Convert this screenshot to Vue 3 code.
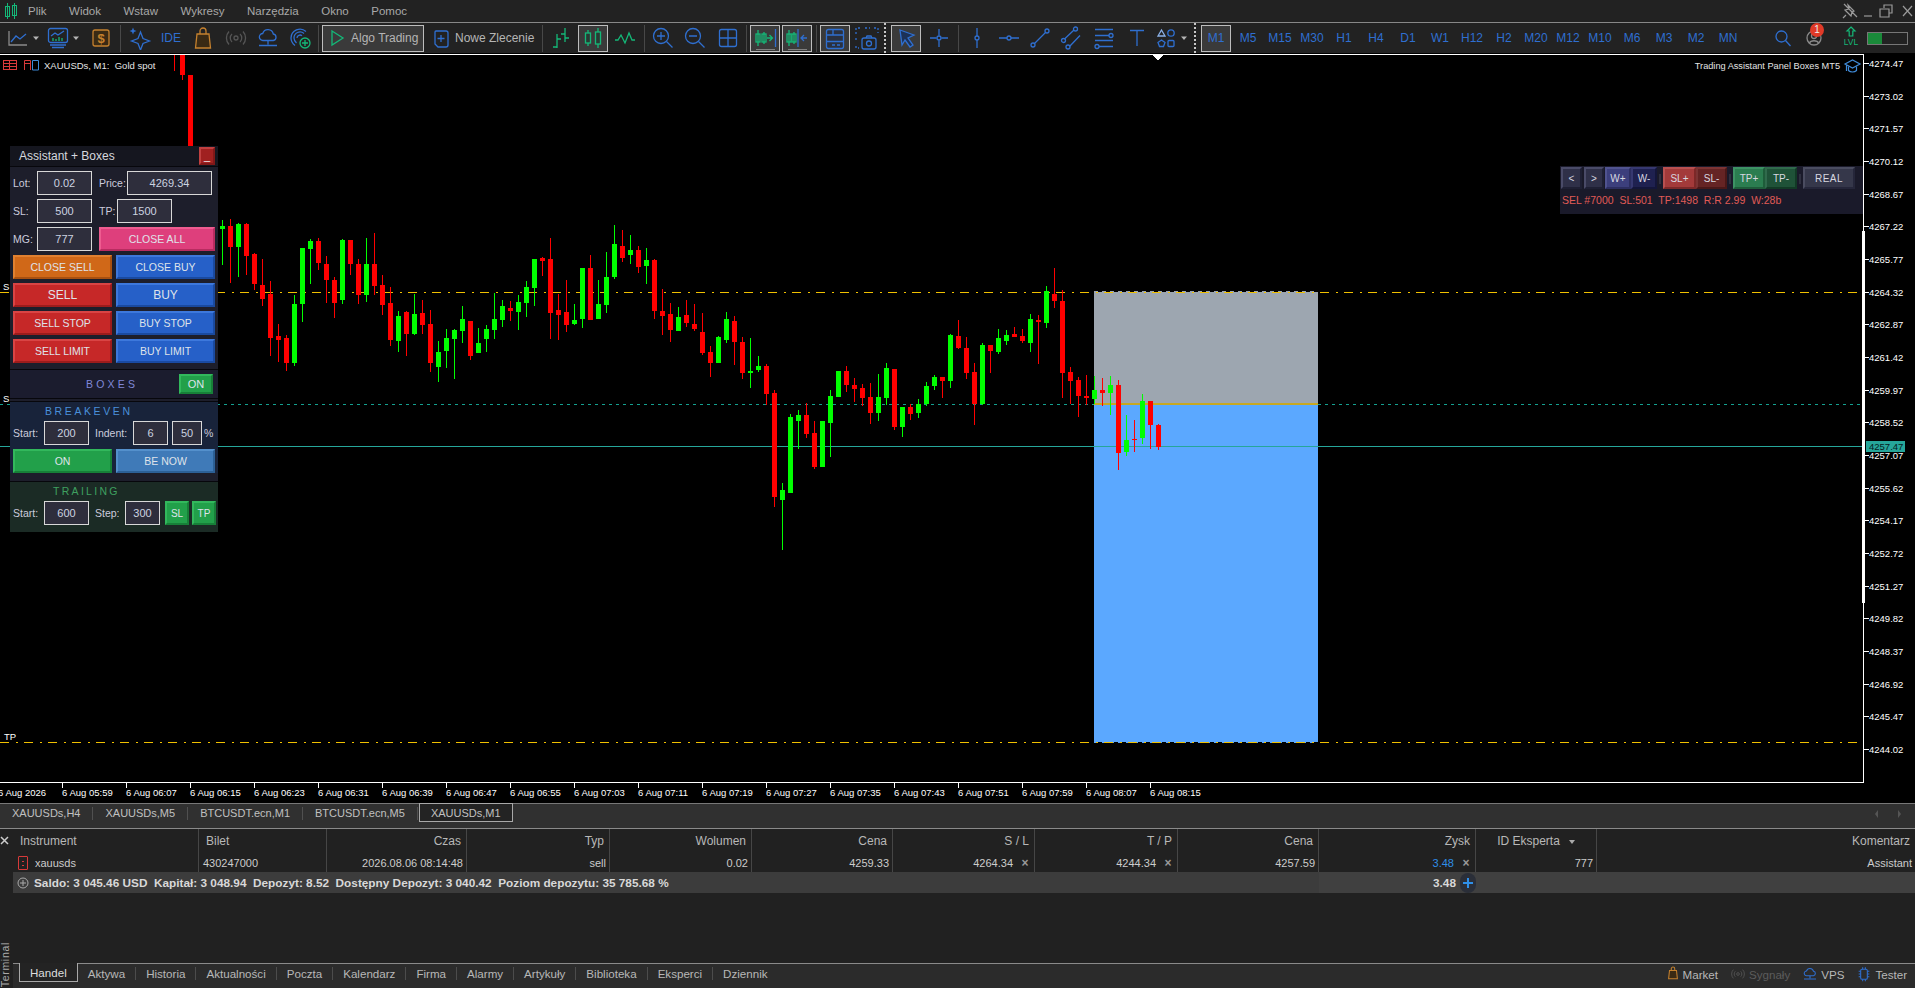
<script setup>
// colours used by the toolbar icons
const B = '#2f6fd0'
const G = '#14b878'
const O = '#c5812e'
const D = '#8a8a8a'

const arcs = c => `<circle cx="12" cy="12" r="2" stroke="${c}"/><path d="M8 8a5.5 5.5 0 0 0 0 8M16 8a5.5 5.5 0 0 1 0 8M5 5.5a9.5 9.5 0 0 0 0 13M19 5.5a9.5 9.5 0 0 1 0 13" stroke="${c}"/>`
const cloud = `<path d="M7 14.5a3.5 3.5 0 0 1-.3-7 5.5 5.5 0 0 1 10.6.5 3.3 3.3 0 0 1 0 6.5zM12 14.5v4M3 19.5h18" stroke="${B}"/>`
const bag = `<path d="M6 8h12l1.5 14h-15z" stroke="${O}" fill="#3a2a14"/><path d="M9 8V5a3 3 0 0 1 6 0v3" stroke="${O}"/>`
const dot = (x, y) => `<circle cx="${x}" cy="${y}" r="2" stroke="${B}"/>`

const icons = {
  line: `<path d="M3 5v14h18" stroke="${D}"/><path d="M5 16l5-6 4 3 6-5" stroke="${B}"/>`,
  caret: `<path d="M9 10.5h6l-3 3.5z" fill="#b5b5b5"/>`,
  monitor: `<rect x="2.5" y="2.5" width="19" height="14" rx="2" stroke="${B}"/><path d="M5 10l4-3 3 2 6-4" stroke="${B}"/><path d="M7 15v-3M10 15v-2M13 15v-4M16 15v-3" stroke="${G}"/><path d="M4 19h16M6 21.5h12" stroke="${B}"/>`,
  dollar: `<rect x="4" y="4" width="16" height="16" rx="2" stroke="${O}" fill="#3a2a14"/><text x="12" y="16.5" font-size="13" font-weight="700" text-anchor="middle" fill="${O}" font-family="Liberation Sans, sans-serif">$</text>`,
  star: `<path d="M12.5 6l2.5 6.5 6.5 2.5-6.5 2.5-2.5 6.5-2.5-6.5-6.5-2.5 6.5-2.5z" stroke="${B}"/><path d="M5 1.5l1 2.5 2.5 1-2.5 1-1 2.5-1-2.5-2.5-1 2.5-1z" fill="${B}"/>`,
  bag,
  signal: arcs('#555'),
  cloud,
  signalPlus: `<path d="M3 12a9 9 0 0 1 15-6.500M6 12a6 6 0 0 1 10-4.500M9 12a3 3 0 0 1 5-2.200M3 12c0 3 1.500 5.500 4 7.500M6 12c0 2 1 3.500 2.500 5" stroke="${B}"/><circle cx="17" cy="17" r="5" stroke="${G}"/><path d="M17 14v6M14 17h6" stroke="${G}"/>`,
  play: `<path d="M7 5l11 7-11 7z" stroke="${G}"/>`,
  order: `<path d="M7 5h10a2 2 0 0 1 2 2v12a2 2 0 0 1-2 2h-8l-3-3V6a1 1 0 0 1 1-1z" stroke="${B}"/><path d="M12 9v7M8.500 12.500h7" stroke="${B}"/>`,
  bars: `<path d="M8 8v14M4 21h4M8 13h4M16 2v14M12 8h4M16 12h4" stroke="${G}"/>`,
  candles: `<path d="M7 4v16M17 2v20" stroke="${G}"/><rect x="4.500" y="7" width="5" height="10" stroke="${G}" fill="#2a3a34"/><rect x="14.500" y="6" width="5" height="12" stroke="${G}" fill="#2a3a34"/>`,
  zig: `<path d="M2 14h3l3-5 4 8 4-10 3 7h3" stroke="${G}"/>`,
  zoomIn: `<circle cx="10" cy="10" r="7.500" stroke="${B}"/><path d="M15.500 15.500l6 6M10 6v8M6 10h8" stroke="${B}"/>`,
  zoomOut: `<circle cx="10" cy="10" r="7.500" stroke="${B}"/><path d="M15.500 15.500l6 6M6 10h8" stroke="${B}"/>`,
  grid: `<rect x="3.500" y="3.500" width="17" height="17" rx="2" stroke="${B}"/><path d="M12 3.500v17M3.500 12h17" stroke="${B}"/>`,
  shiftR: `<path d="M5 4v16M11 6v12" stroke="${G}"/><rect x="3" y="8" width="4" height="8" stroke="${G}"/><rect x="9" y="8" width="4" height="8" stroke="${G}"/><path d="M14 12h5M16.500 9l3 3-3 3" stroke="${G}"/><path d="M22.500 3v18" stroke="${B}"/><path d="M3 24h19" stroke="#999" stroke-width="1.500"/>`,
  shiftL: `<path d="M4 4v16M9 6v12" stroke="${G}"/><rect x="2" y="8" width="4" height="8" stroke="${G}"/><rect x="7" y="8" width="4" height="8" stroke="${G}"/><path d="M13 3v18" stroke="${B}"/><path d="M22 12h-6M19 9l-3 3 3 3" stroke="${B}"/><path d="M3 24h19" stroke="#999" stroke-width="1.500"/>`,
  layout: `<rect x="3.500" y="3.500" width="17" height="19" rx="2" stroke="${B}" fill="#2a3140"/><path d="M3.500 9h17M3.500 15.500h17M10 3.500V9M9 19h3M14 19h3" stroke="${B}"/>`,
  camera: `<path d="M1 8V2h5M10 2h5M19 2h4v5M1 12v4M1 20v2h3" stroke="${B}" stroke-dasharray="2 2"/><rect x="7" y="12" width="14" height="11" rx="2" stroke="${B}"/><path d="M11 12l1-2h4l1 2" stroke="${B}"/><circle cx="14" cy="17.500" r="2.500" stroke="${B}"/>`,
  cursor: `<path d="M6 4l14 5-6 3 5 7-3 2-5-7-3 5z" stroke="${B}" fill="#1c3157"/>`,
  cross: `<path d="M12 3v6.500M12 14.500V21M3 12h6.500M14.500 12H21" stroke="${B}"/>${dot(12, 12)}`,
  vline: `<path d="M12 2v8M12 14v8" stroke="${B}"/>${dot(12, 12)}`,
  hline: `<path d="M2 12h8M14 12h8" stroke="${B}"/>${dot(12, 12)}`,
  trend: `<path d="M6.500 17.500L17.500 6.500" stroke="${B}"/>${dot(5, 19)}${dot(19, 5)}`,
  channel: `<path d="M4.500 13L14 4M9.500 20.500L20 9.500" stroke="${B}"/>${dot(3.5, 14.500)}${dot(15.500, 3)}${dot(8, 21)}`,
  fibo: `<path d="M3 3.500h18M3 9.500h14M3 14.500h18M7 20.500h14" stroke="${B}"/>${dot(19, 9.500)}${dot(5, 20.500)}`,
  textTool: `<path d="M5 4.500h14M12 4.500V20" stroke="${B}"/>`,
  shapes: `<path d="M7.500 4l3.500 6H4z" stroke="#8ab0e6"/><circle cx="17" cy="7" r="3.200" stroke="${B}"/><path d="M7.500 14l3.500 2.500-1.500 4h-4L4 16.500z" stroke="${B}"/><rect x="14" y="14.500" width="6" height="6" rx="1" stroke="${B}"/>`,
  search: `<circle cx="10.500" cy="10.500" r="5.500" stroke="${B}"/><path d="M14.500 14.500l5 5.500" stroke="${B}"/>`,
  avatar: `<circle cx="12" cy="12" r="7" stroke="${D}"/><circle cx="12" cy="10" r="2.500" stroke="${D}"/><path d="M7.500 17c1-3 8-3 9 0" stroke="${D}"/>`,
  level: `<path d="M12 1l4 4h-2.200v5h-3.600V5H8z" stroke="${G}"/><text x="12" y="19" font-size="8.500" text-anchor="middle" fill="${G}" font-family="Liberation Sans, sans-serif">LVL</text>`,
  chip: `<rect x="7" y="5" width="10" height="15" rx="2" stroke="${B}"/><path d="M4 8h3M4 12h3M4 16h3M17 8h3M17 12h3M17 16h3M10 2v3M14 2v3M10 20v3M14 20v3" stroke="${B}"/>`
}

// toolbar runs left to right, w is the slot width in px
const tools = [
  { w: 4 }, { w: 28, icon: 'line' }, { w: 8, icon: 'caret' }, { w: 3 },
  { w: 30, icon: 'monitor' }, { w: 6, icon: 'caret' }, { w: 7 }, { w: 30, icon: 'dollar' },
  { w: 8, sep: 1 }, { w: 32, icon: 'star' }, { w: 30, text: 'IDE' }, { w: 34, icon: 'bag' },
  { w: 32, icon: 'signal' }, { w: 32, icon: 'cloud' }, { w: 32, icon: 'signalPlus' },
  { w: 4, sep: 1 }, { w: 2 },
  { w: 102, icon: 'play', label: 'Algo Trading', on: true }, { w: 3 },
  { w: 106, icon: 'order', label: 'Nowe Zlecenie' }, { w: 5 }, { w: 8, sep: 1 },
  { w: 30, icon: 'bars' }, { w: 2 }, { w: 30, icon: 'candles', on: true }, { w: 34, icon: 'zig' },
  { w: 4, sep: 1 }, { w: 2 }, { w: 30, icon: 'zoomIn' }, { w: 34, icon: 'zoomOut' },
  { w: 32, icon: 'grid' }, { w: 4, sep: 1 }, { w: 2 },
  { w: 30, icon: 'shiftR', on: true }, { w: 2 }, { w: 30, icon: 'shiftL', on: true },
  { w: 8, sep: 1 }, { w: 30, icon: 'layout', on: true }, { w: 33, icon: 'camera' },
  { w: 4, sep: 2 }, { w: 4 }, { w: 30, icon: 'cursor', on: true }, { w: 35, icon: 'cross' },
  { w: 4, sep: 1 }, { w: 34, icon: 'vline' }, { w: 30, icon: 'hline' }, { w: 32, icon: 'trend' },
  { w: 32, icon: 'channel' }, { w: 32, icon: 'fibo' }, { w: 33, icon: 'textTool' },
  { w: 26, icon: 'shapes' }, { w: 10, icon: 'caret' }, { w: 4 }, { w: 4, sep: 2 }, { w: 4 }
]
const frames = ['M1', 'M5', 'M15', 'M30', 'H1', 'H4', 'D1', 'W1', 'H12', 'H2', 'M20', 'M12', 'M10', 'M6', 'M3', 'M2', 'MN']

const menu = ['Plik', 'Widok', 'Wstaw', 'Wykresy', 'Narzędzia', 'Okno', 'Pomoc']

// candles read off the chart: [green?, high, bodyTop, bodyBottom, low], at 3x from a base y
const first = [[1,30,48,57,165],[0,28,48,111,218],[1,40,42,111,200],[0,40,42,138,195],[0,130,132,222,240],[0,148,225,267,288],[0,213,252,384,438],[0,342,378,390,456],[0,376,384,459,483],[1,255,282,459,468],[1,114,114,282,336],[1,87,93,117,222],[0,84,93,159,180],[0,138,162,210,279],[0,201,210,279,324],[1,87,90,270,282],[0,90,90,162,195],[0,147,162,255,282],[1,84,162,255,276],[0,69,162,228,255],[0,195,225,285,315],[0,231,279,390,408],[1,303,318,393,426],[0,303,306,372,438],[1,252,312,372,375],[0,270,309,345,372],[0,300,342,459,486],[1,393,426,471,516],[1,357,384,423,474],[1,357,360,387,507],[1,288,327,363,399],[0,333,333,438,450],[1,354,399,429,429],[1,345,357,387,426],[1,249,327,360,387],[1,270,288,330,351],[0,273,294,303,333],[1,255,276,306,360],[1,213,231,279,321],[1,147,147,234,288],[0,141,144,153,198],[0,84,147,309,387],[0,252,300,315,390],[0,210,306,345,366],[1,282,330,342,345],[1,174,174,327,354],[0,135,174,330,330],[1,210,282,327,327],[1,126,201,285,309],[1,45,102,201,207],[0,60,108,144,156],[1,75,120,135,162],[0,108,120,171,189],[1,114,150,168,222],[0,147,150,303,327],[0,237,303,318,375],[0,279,312,360,396],[1,291,321,363,363],[0,270,315,339,351],[0,282,342,357,363]]
const second = [[0,129,186,249,255],[0,228,246,279,321],[1,198,201,279,279],[1,126,147,210,219],[0,138,153,216,285],[0,201,216,309,327],[1,204,303,309,354],[1,258,288,300,306],[0,282,288,372,405],[0,360,369,681,711],[1,640,660,690,840],[1,432,441,669,669],[1,420,435,453,537],[0,399,435,492,504],[0,453,489,591,597],[1,453,453,591,591],[1,360,378,459,561],[1,303,303,381,381],[0,288,303,345,366],[0,324,345,357,396],[0,342,354,384,408],[0,339,381,429,462],[1,312,381,429,453],[1,279,294,384,405],[0,297,297,471,480],[1,411,411,471,501],[0,402,411,432,450],[1,387,402,429,444],[1,336,348,402,408],[1,315,321,348,360],[0,321,321,333,384],[1,192,195,333,354],[0,150,198,234,237],[0,201,234,309,327],[0,279,306,402,465],[1,219,225,402,405],[0,225,225,243,309],[1,177,204,246,252],[1,180,195,213,225],[0,171,192,201,201],[0,177,198,213,219],[1,132,147,219,246],[0,135,150,156,282],[1,48,63,159,174],[0,-6,72,93,114],[0,60,93,309,384],[0,291,306,333,402],[0,321,330,378,441],[0,315,378,384,405],[1,318,360,387,402],[0,324,360,369,408],[1,318,345,369,435],[0,330,345,549,600],[1,435,510,546,558],[0,450,507,510,546],[1,372,393,504,522],[0,393,393,465,537],[0,462,465,531,540]]

function build(list, base, startIndex) {
  return list.map((c, i) => {
    const x = 222 + (startIndex + i) * 8
    const top = Math.round(base + c[2] / 3)
    return {
      x,
      color: c[0] ? '#00ff00' : '#ff0000',
      hi: Math.round(base + c[1] / 3),
      lo: Math.round(base + c[4] / 3),
      top,
      h: Math.max(1, Math.round(base + c[3] / 3) - top)
    }
  })
}
const candles = [...build(first, 210, 0), ...build(second, 270, 60)]

const priceTicks = Array.from({ length: 22 }, (_, i) => ({
  y: Math.round(63 + 32.67 * i),
  label: (4274.47 - 1.45 * i).toFixed(2)
}))

function clock(m) {
  const h = Math.floor(m / 60)
  return '6 Aug ' + String(h).padStart(2, '0') + ':' + String(m % 60).padStart(2, '0')
}
const timeTicks = Array.from({ length: 18 }, (_, i) => ({ x: 62 + i * 64, label: clock(359 + i * 8) }))

const chartTabs = ['XAUUSDs,H4', 'XAUUSDs,M5', 'BTCUSDT.ecn,M1', 'BTCUSDT.ecn,M5']
const bottomTabs = ['Aktywa', 'Historia', 'Aktualności', 'Poczta', 'Kalendarz', 'Firma', 'Alarmy', 'Artykuły', 'Biblioteka', 'Eksperci', 'Dziennik']
</script>

<template>
  <div class="page">
    <div class="menubar">
      <svg class="logo" width="14" height="18" viewBox="0 0 14 18" fill="none">
        <path d="M3.500 1v16M10.500 1v16" stroke="#14b878" />
        <rect x="1.500" y="4.500" width="4" height="10" stroke="#14b878" />
        <rect x="8.500" y="3.500" width="4" height="10" stroke="#14b878" />
      </svg>
      <span v-for="m in menu" :key="m" class="menu-item">{{ m }}</span>
      <div class="win">
        <svg width="18" height="18" viewBox="0 0 18 18" fill="none" stroke="#9a9a9a" stroke-width="1.200">
          <path d="M7 3l6 6-2 1-1 4-6-6 4-1zM5 13l-3 3M3 2l13 13" />
        </svg>
        <svg width="18" height="18" viewBox="0 0 18 18" fill="none" stroke="#9a9a9a" stroke-width="1.200"><path d="M5 14h8" /></svg>
        <svg width="18" height="18" viewBox="0 0 18 18" fill="none" stroke="#9a9a9a" stroke-width="1.200">
          <path d="M7 6V3h8v8h-3M3 7h9v8H3z" />
        </svg>
        <svg class="win-close" width="15" height="18" viewBox="0 0 15 18" fill="none" stroke="#9a9a9a" stroke-width="1.200"><path d="M3 4l9 10M12 4L3 14" /></svg>
      </div>
    </div>

    <div class="toolbar">
      <template v-for="(t, i) in tools" :key="i">
        <div v-if="t.sep" class="slot" :style="{ width: t.w + 'px' }">
          <i :class="t.sep === 2 ? 'dots' : 'bar'"></i>
        </div>
        <div v-else class="slot" :class="{ on: t.on, wide: t.label }" :style="{ width: t.w + 'px' }">
          <svg v-if="t.icon" class="ico" width="24" height="24" viewBox="0 0 24 24" fill="none" stroke-width="1.300" v-html="icons[t.icon]"></svg>
          <span v-if="t.label" class="tool-label">{{ t.label }}</span>
          <span v-if="t.text" class="tool-text">{{ t.text }}</span>
        </div>
      </template>
      <span v-for="(f, i) in frames" :key="f" class="tf" :class="{ on: i === 0 }">{{ f }}</span>
      <div class="tool-right">
        <svg width="24" height="24" viewBox="0 0 24 24" fill="none" stroke-width="1.300" v-html="icons.search"></svg>
        <div class="avatar">
          <svg width="24" height="24" viewBox="0 0 24 24" fill="none" stroke-width="1.300" v-html="icons.avatar"></svg>
          <span class="badge">1</span>
        </div>
        <svg class="lvl" width="24" height="24" viewBox="0 0 24 24" fill="none" stroke-width="1.200" v-html="icons.level"></svg>
        <div class="meter"><i></i></div>
      </div>
    </div>

    <div class="chart">
      <svg class="plot" width="1915" height="750" viewBox="0 53 1915 750">
        <g shape-rendering="crispEdges">
          <rect x="0" y="54" width="1864" height="1" fill="#fff" />
          <path d="M1152 55h12l-6 5z" fill="#fff" />

          <!-- position box -->
          <rect x="1094" y="292" width="224" height="112" fill="#9da6b0" />
          <rect x="1094" y="404" width="224" height="338" fill="#5ba8ff" />
          <path d="M1094 291.500h224" stroke="#9da6b0" stroke-dasharray="4 4" />
          <path d="M1094 742.500h224" stroke="#5ba8ff" stroke-dasharray="4 4" />

          <!-- levels -->
          <path d="M0 292.500h1863" stroke="#f0c000" stroke-dasharray="9 7 2 6" />
          <path d="M0 742.500h1863" stroke="#f0c000" stroke-dasharray="9 7 2 6" />
          <path d="M0 404.500h1094" stroke="#14a090" stroke-dasharray="3 4" />
          <path d="M1318 404.500h545" stroke="#14a090" stroke-dasharray="3 4" />
          <rect x="0" y="446" width="1863" height="1" fill="#26a69a" />
          <rect x="1094" y="403" width="224" height="2" fill="#c8a820" />

          <!-- candles -->
          <rect x="174" y="55" width="1" height="16" fill="#ff0000" />
          <rect x="182" y="55" width="1" height="25" fill="#ff0000" />
          <rect x="180" y="55" width="5" height="20" fill="#ff0000" />
          <rect x="188" y="75" width="5" height="72" fill="#ff0000" />
          <g v-for="c in candles" :key="c.x">
            <rect :x="c.x" :y="c.hi" width="1" :height="c.lo - c.hi" :fill="c.color" />
            <rect :x="c.x - 2" :y="c.top" width="5" :height="c.h" :fill="c.color" />
          </g>

          <!-- axes -->
          <rect x="0" y="782" width="1864" height="1" fill="#fff" />
          <rect x="1863" y="54" width="1" height="729" fill="#fff" />
          <rect x="1862" y="231" width="3" height="372" fill="#fff" />
          <rect v-for="p in priceTicks" :key="p.y" x="1864" :y="p.y" width="5" height="1" fill="#fff" />
          <rect v-for="t in timeTicks" :key="t.x" :x="t.x" y="783" width="1" height="5" fill="#fff" />
        </g>

        <text v-for="p in priceTicks" :key="p.label" class="axis" x="1869" :y="p.y + 4">{{ p.label }}</text>
        <rect x="1866" y="441" width="39" height="11" fill="#26a69a" />
        <text class="axis bid" x="1869" y="450">4257.47</text>
        <text v-for="t in timeTicks" :key="t.label" class="axis" :x="t.x" y="796">{{ t.label }}</text>
        <text class="axis" x="-2" y="796">6 Aug 2026</text>

        <text class="axis" x="3" y="290">S</text>
        <text class="axis" x="3" y="402">S</text>
        <text class="axis" x="4" y="740">TP</text>

        <!-- chart corner marks -->
        <g fill="none" stroke-width="1">
          <rect x="3.500" y="60.500" width="13" height="9" stroke="#d93a3a" />
          <path d="M3 63.500h14M3 66.500h14M9.500 60v10" stroke="#d93a3a" />
          <path d="M24.500 70V60.500h6V70" stroke="#d93a3a" />
          <path d="M32.500 60.500h6V70h-6z" stroke="#3f8ad8" />
          <path d="M25 63.500h5" stroke="#d93a3a" />
        </g>
        <text class="axis title-l" x="44" y="69">XAUUSDs, M1:&nbsp; Gold spot</text>
        <text class="axis title-r" x="1840" y="69" text-anchor="end">Trading Assistant Panel Boxes MT5</text>
        <g fill="none" stroke="#3f8ad8" stroke-width="1.200">
          <path d="M1845 64l7.500-4 7.500 4-7.500 4z" />
          <path d="M1848.500 66.500v4c2 2 6 2 8 0v-4M1846.500 65v6" />
        </g>
      </svg>

      <!-- assistant panel floats over the chart -->
      <div class="panel">
        <div class="panel-title">
          <span>Assistant + Boxes</span>
          <button class="btn min">_</button>
        </div>
        <div class="panel-body">
          <div class="row">
            <label class="lab-a">Lot:</label><span class="field f55">0.02</span>
            <label class="lab-p">Price:</label><span class="field f85">4269.34</span>
          </div>
          <div class="row">
            <label class="lab-a">SL:</label><span class="field f55">500</span>
            <label class="lab-t">TP:</label><span class="field f55">1500</span>
          </div>
          <div class="row">
            <label class="lab-a">MG:</label><span class="field f55">777</span>
            <button class="btn pink closeall">CLOSE ALL</button>
          </div>
          <div class="pair"><button class="btn orange">CLOSE SELL</button><button class="btn blue">CLOSE BUY</button></div>
          <div class="pair"><button class="btn red big">SELL</button><button class="btn blue big">BUY</button></div>
          <div class="pair"><button class="btn red">SELL STOP</button><button class="btn blue">BUY STOP</button></div>
          <div class="pair"><button class="btn red">SELL LIMIT</button><button class="btn blue">BUY LIMIT</button></div>
        </div>
        <div class="boxes">
          <span class="boxes-name">BOXES</span>
          <button class="btn green boxes-on">ON</button>
        </div>
        <div class="gap3"></div>
        <div class="be">
          <div class="be-title">BREAKEVEN</div>
          <div class="row">
            <label class="lab-s">Start:</label><span class="field f45">200</span>
            <label class="lab-i">Indent:</label><span class="field f35">6</span>
            <span class="field f30">50</span><label class="lab-pc">%</label>
          </div>
          <div class="pair"><button class="btn green">ON</button><button class="btn steel">BE NOW</button></div>
        </div>
        <div class="gap8"></div>
        <div class="tr">
          <div class="tr-title">TRAILING</div>
          <div class="row">
            <label class="lab-s">Start:</label><span class="field f45">600</span>
            <label class="lab-st">Step:</label><span class="field f35">300</span>
            <button class="btn green tiny">SL</button><button class="btn green tiny">TP</button>
          </div>
        </div>
      </div>

      <div class="quick">
        <div class="quick-row">
          <button class="qb qb-nav w21">&lt;</button>
          <button class="qb qb-nav w20 ml2">&gt;</button>
          <button class="qb qb-wp w26 ml1">W+</button>
          <button class="qb qb-wm w26">W-</button>
          <i class="qsep"></i>
          <button class="qb qb-sp w33">SL+</button>
          <button class="qb qb-sm w31">SL-</button>
          <i class="qsep"></i>
          <button class="qb qb-tp w32">TP+</button>
          <button class="qb qb-tm w32">TP-</button>
          <i class="qsep"></i>
          <button class="qb qb-real w52">REAL</button>
        </div>
        <div class="quick-info">SEL #7000&nbsp; SL:501&nbsp; TP:1498&nbsp; R:R 2.99&nbsp; W:28b</div>
      </div>
    </div>

    <div class="tabstrip">
      <span v-for="t in chartTabs" :key="t" class="ctab">{{ t }}</span>
      <span class="ctab active">XAUUSDs,M1</span>
      <svg class="tab-arrows" width="28" height="10" viewBox="0 0 28 10" fill="#555">
        <path d="M4 1L1 5l3 4zM24 1l3 4-3 4z" />
      </svg>
    </div>

    <div class="terminal">
      <div class="side">
        <svg width="10" height="10" viewBox="0 0 10 10" fill="none" stroke="#ccc" stroke-width="1.500"><path d="M1 1l7 7M8 1L1 8" /></svg>
        <span class="side-label">Terminal</span>
      </div>
      <div class="term-main">
        <div class="table">
          <div class="cell head pl">Instrument</div>
          <div class="cell head pl">Bilet</div>
          <div class="cell head r">Czas</div>
          <div class="cell head r">Typ</div>
          <div class="cell head r">Wolumen</div>
          <div class="cell head r">Cena</div>
          <div class="cell head r">S / L</div>
          <div class="cell head r">T / P</div>
          <div class="cell head r">Cena</div>
          <div class="cell head r">Zysk</div>
          <div class="cell head id">ID Eksperta<i class="sort"></i></div>
          <div class="cell head r last">Komentarz</div>

          <div class="cell val instrument"><i class="sell-mark"></i>xauusds</div>
          <div class="cell val">430247000</div>
          <div class="cell val r">2026.08.06 08:14:48</div>
          <div class="cell val r">sell</div>
          <div class="cell val r">0.02</div>
          <div class="cell val r">4259.33</div>
          <div class="cell val r x">4264.34<em>×</em></div>
          <div class="cell val r x">4244.34<em>×</em></div>
          <div class="cell val r">4257.59</div>
          <div class="cell val r x"><b>3.48</b><em>×</em></div>
          <div class="cell val r">777</div>
          <div class="cell val r last">Assistant</div>

          <div class="summary-text">
            <svg width="12" height="12" viewBox="0 0 12 12" fill="none" stroke="#aaa"><circle cx="6" cy="6" r="5" /><path d="M6 3v6M3 6h6" /></svg>
            <span>Saldo: 3 045.46 USD&nbsp; Kapitał: 3 048.94&nbsp; Depozyt: 8.52&nbsp; Dostępny Depozyt: 3 040.42&nbsp; Poziom depozytu: 35 785.68 %</span>
          </div>
          <div class="summary-sum">
            <span>3.48</span>
            <span class="plus"><svg width="14" height="14" viewBox="0 0 14 14" stroke="#2f8fe8" stroke-width="2"><path d="M7 2v10M2 7h10" /></svg></span>
          </div>
          <div class="summary-rest"></div>
        </div>

        <div class="bottom">
          <span class="btab active">Handel</span>
          <span v-for="t in bottomTabs" :key="t" class="btab">{{ t }}</span>
          <div class="status">
            <span class="st"><svg width="14" height="18" viewBox="0 0 24 28" fill="none" stroke-width="1.800" v-html="icons.bag"></svg>Market</span>
            <span class="st dim"><svg width="16" height="16" viewBox="0 0 24 24" fill="none" stroke-width="1.300" v-html="icons.signal"></svg>Sygnały</span>
            <span class="st"><svg width="16" height="16" viewBox="0 0 24 24" fill="none" stroke-width="1.600" v-html="icons.cloud"></svg>VPS</span>
            <span class="st"><svg width="16" height="16" viewBox="0 0 24 24" fill="none" stroke-width="1.600" v-html="icons.chip"></svg>Tester</span>
          </div>
        </div>
      </div>
    </div>
  </div>
</template>

<style>
html, body { margin: 0; background: #222; overflow: hidden; }
</style>

<style scoped>
.page {
  width: 1915px;
  height: 988px;
  display: flex;
  flex-direction: column;
  overflow: hidden;
  font-family: "Liberation Sans", Arial, sans-serif;
  background: #222;
  color: #bbb;
}

/* menu */
.menubar {
  height: 22px;
  flex: none;
  display: flex;
  align-items: center;
  padding-left: 4px;
  border-bottom: 1px solid #888;
  background: #222;
  font-size: 11.500px;
  color: #a8a8a8;
}
.logo { margin-right: 10px; }
.menu-item { margin-right: 22.500px; }
.win { margin-left: auto; display: flex; align-items: center; }
.win-close { margin-left: 5px; }

/* toolbar */
.toolbar {
  height: 30px;
  flex: none;
  display: flex;
  align-items: center;
  background: #222;
}
.slot {
  flex: none;
  height: 27px;
  box-sizing: border-box;
  display: flex;
  align-items: center;
  justify-content: center;
}
.ico { flex: none; }
.slot.on, .tf.on {
  background: #3a3a3a;
  border: 1px solid #bdbdbd;
}
.slot.wide { justify-content: flex-start; padding-left: 2px; gap: 2px; }
.tool-label { font-size: 12px; color: #b5b5b5; white-space: nowrap; }
.tool-text { font-size: 12px; color: #2f6fd0; }
.bar { width: 1px; height: 27px; background: #484848; }
.dots { width: 2px; height: 30px; background: repeating-linear-gradient(#c8c8c8 0 2px, transparent 2px 4px); }
.tf {
  flex: none;
  width: 32px;
  height: 27px;
  box-sizing: border-box;
  display: flex;
  align-items: center;
  justify-content: center;
  font-size: 12px;
  color: #2f6fd0;
}
.tf.on { width: 30px; margin-right: 1px; }
.tool-right { margin-left: auto; display: flex; align-items: center; padding-right: 7px; }
.avatar { position: relative; margin-left: 7px; width: 24px; height: 24px; }
.badge {
  position: absolute;
  left: 8px;
  top: -3px;
  width: 14px;
  height: 14px;
  border-radius: 50%;
  background: #e03a28;
  color: #eee;
  font-size: 10px;
  line-height: 14px;
  text-align: center;
}
.lvl { margin-left: 13px; margin-right: 4px; }
.meter { width: 41px; height: 13px; box-sizing: border-box; border: 1px solid #777; background: #222; }
.meter i { display: block; width: 14px; height: 100%; background: #1a8a3a; }

/* chart */
.chart {
  position: relative;
  height: 750px;
  flex: none;
  background: #000;
  overflow: hidden;
}
.plot { display: block; }
.axis { font-size: 9.500px; fill: #fff; font-family: "Liberation Sans", Arial, sans-serif; }
.axis.bid { fill: #04201c; }
.axis.title-l { fill: #e4e4e4; }
.axis.title-r { font-size: 9.200px; fill: #e4e4e4; }

/* assistant panel */
.panel {
  position: absolute;
  left: 10px;
  top: 93px;
  width: 208px;
  background: #1d1e2b;
  font-size: 10.500px;
  color: #ccd;
}
.panel-title {
  height: 20px;
  display: flex;
  align-items: center;
  justify-content: space-between;
  padding: 0 3px 0 9px;
  background: #15161f;
  border-bottom: 1px solid #07070c;
  font-size: 12px;
  color: #d6d8de;
}
.panel-body {
  display: flex;
  flex-direction: column;
  gap: 4px;
  padding: 4px 0 6px 3px;
  border-bottom: 1px solid #07070c;
}
.row { display: flex; align-items: center; height: 24px; }
.pair { display: flex; gap: 4px; }
.pair .btn { width: 99px; height: 24px; }
.field {
  height: 24px;
  box-sizing: border-box;
  border: 1px solid #d8d8d8;
  background: #2e2e3c;
  font-size: 11px;
  line-height: 22px;
  text-align: center;
  color: #ccd3e0;
}
.f30 { width: 30px; margin-left: 4px; }
.f35 { width: 35px; }
.f45 { width: 45px; }
.f55 { width: 55px; }
.f85 { width: 85px; }
.lab-a { width: 24px; }
.lab-p { width: 28px; margin-left: 7px; }
.lab-t { width: 18px; margin-left: 7px; }
.lab-s { width: 31px; }
.lab-i { width: 38px; margin-left: 6px; }
.lab-st { width: 30px; margin-left: 6px; }
.lab-pc { margin-left: 2px; }

.btn {
  box-sizing: border-box;
  margin: 0;
  padding: 0;
  border-style: solid;
  border-width: 2px;
  font-family: inherit;
  font-size: 10.500px;
  color: #dfe3ea;
}
.btn.big { font-size: 12px; }
.red { background: #c62828; border-color: #d94444 #9c1c1c #9c1c1c #d94444; }
.blue { background: #2660c8; border-color: #3d78dc #1a4aa0 #1a4aa0 #3d78dc; }
.orange { background: #d06818; border-color: #e08030 #a85010 #a85010 #e08030; }
.pink { background: #de3f7c; border-color: #ee5c90 #b82c60 #b82c60 #ee5c90; }
.green { background: #22a04a; border-color: #32b85c #178038 #178038 #32b85c; }
.steel { background: #3f7ab8; border-color: #5490cc #2c6096 #2c6096 #5490cc; }
.min {
  width: 16px;
  height: 18px;
  background: #a02020;
  border-color: #c04040 #801818 #801818 #c04040;
  font-size: 11px;
  line-height: 10px;
  color: #eee;
}
.closeall { width: 116px; height: 24px; margin-left: 7px; }
.boxes {
  height: 28px;
  display: flex;
  align-items: center;
  background: #1b1c2e;
  border-bottom: 1px solid #07070c;
}
.boxes-name { margin-left: 76px; letter-spacing: 3.200px; color: #8088d8; }
.boxes-on { width: 34px; height: 20px; margin-left: auto; margin-right: 5px; font-size: 11px; }
.gap3 { height: 2px; border-bottom: 1px solid #07070c; }
.be { height: 71px; box-sizing: border-box; padding-left: 3px; background: #18233a; }
.be-title { height: 19px; line-height: 18px; margin-left: 32px; letter-spacing: 2.600px; color: #4a90d9; }
.be .pair { margin-top: 4px; }
.gap8 { height: 8px; border-bottom: 1px solid #07070c; }
.tr { height: 50px; box-sizing: border-box; padding-left: 3px; background: #1b2b25; }
.tr-title { height: 19px; line-height: 18px; margin-left: 40px; letter-spacing: 2.300px; color: #3fa060; }
.tiny { width: 24px; height: 24px; margin-left: 5px; font-size: 10px; }
.tiny + .tiny { margin-left: 3px; }

/* quick panel on the right */
.quick {
  position: absolute;
  left: 1560px;
  top: 113px;
  width: 303px;
  height: 48px;
  background: #1a1a2a;
}
.quick-row { display: flex; padding: 1px 0 0 1px; }
.qb {
  box-sizing: border-box;
  flex: none;
  height: 22px;
  margin: 0;
  padding: 0;
  border-style: solid;
  border-width: 2px;
  font-family: inherit;
  font-size: 10px;
  color: #d8d8e0;
}
.qsep { flex: none; width: 2px; height: 10px; margin: 7px 2px 0; background: #2f3040; }
.qb-nav { background: #2f3048; border-color: #4a4b68 #1f2034 #1f2034 #4a4b68; }
.qb-wp { background: #3c3f7c; border-color: #50538f #2c2e60 #2c2e60 #50538f; }
.qb-wm { background: #1f2150; border-color: #363870 #14163a #14163a #363870; }
.qb-sp { background: #a33a3a; border-color: #b85050 #7c2828 #7c2828 #b85050; }
.qb-sm { background: #652424; border-color: #7c3434 #4a1818 #4a1818 #7c3434; }
.qb-tp { background: #2b7d50; border-color: #3d9264 #1e5c3a #1e5c3a #3d9264; }
.qb-tm { background: #1f5238; border-color: #306a4c #123a26 #123a26 #306a4c; }
.qb-real { background: #35374a; border-color: #4a4c60 #25263a #25263a #4a4c60; letter-spacing: 0.500px; }
.w20 { width: 20px; }
.w21 { width: 21px; }
.w26 { width: 26px; }
.w31 { width: 31px; }
.w32 { width: 32px; }
.w33 { width: 33px; }
.w52 { width: 52px; }
.ml1 { margin-left: 1px; }
.ml2 { margin-left: 2px; }
.quick-info { padding: 5px 0 0 2px; font-size: 10.500px; color: #e05a56; white-space: nowrap; }

/* chart tabs */
.tabstrip {
  position: relative;
  height: 24px;
  flex: none;
  display: flex;
  align-items: flex-start;
  border-top: 1px solid #777;
  border-bottom: 1px solid #8a8a8a;
  background: #303030;
  font-size: 11px;
  color: #c0c0c0;
}
.ctab {
  height: 13px;
  margin-top: 3px;
  padding: 0 12px;
  border-right: 1px solid #505050;
  white-space: nowrap;
}
.ctab.active {
  height: 19px;
  margin: -1px 0 0 1px;
  padding: 0 11px;
  line-height: 19px;
  border: 1px solid #a8a8a8;
  background: #232323;
  box-sizing: border-box;
}
.tab-arrows { position: absolute; right: 13px; top: 5px; }

/* terminal */
.terminal { flex: 1; display: flex; min-height: 0; background: #212121; }
.side { position: relative; width: 13px; flex: none; padding: 7px 0 0 0; box-sizing: border-box; }
.side svg { display: block; }
.side-label {
  position: absolute;
  left: -1px;
  bottom: 1px;
  writing-mode: vertical-rl;
  transform: rotate(180deg);
  font-size: 10.500px;
  letter-spacing: 0.700px;
  color: #aaa;
}
.term-main { flex: 1; min-width: 0; display: flex; flex-direction: column; }
.table {
  display: grid;
  grid-template-columns: 186px 128px 140px 143px 142px 141px 142px 143px 141px 157px 121px 1fr;
  grid-template-rows: 24px 19px 21px;
  font-size: 11px;
  color: #cccccc;
}
.cell {
  box-sizing: border-box;
  display: flex;
  align-items: center;
  padding-left: 4px;
  border-right: 1px solid #464646;
  white-space: nowrap;
}
.cell.last { border-right: 0; }
.head { font-size: 12px; color: #b8b8b8; }
.head.pl { padding-left: 7px; }
.head.r { justify-content: flex-end; padding-right: 5px; }
.val.r { justify-content: flex-end; padding-right: 3px; }
.val.x { padding-right: 5px; }
.val.x em { width: 8px; margin-left: 8px; font-style: normal; font-weight: 700; font-size: 12px; line-height: 12px; text-align: center; color: #999; }
.val b { font-weight: 400; color: #2f8fe8; }
.head.id { justify-content: center; gap: 9px; padding: 0; }
.sort { width: 0; height: 0; border: 3px solid transparent; border-top: 4px solid #aaa; margin-top: 4px; }
.instrument { padding-left: 5px; gap: 7px; }
.sell-mark {
  width: 10px;
  height: 14px;
  box-sizing: border-box;
  border: 1px solid #d83a3a;
  border-radius: 1px;
  background: linear-gradient(#d83a3a, #d83a3a) center 4px / 2px 1px no-repeat, linear-gradient(#d83a3a, #d83a3a) center 8px / 2px 1px no-repeat;
}
.summary-text {
  grid-column: 1 / 10;
  display: flex;
  align-items: center;
  gap: 5px;
  padding-left: 4px;
  background: #3c3c3c;
  font-size: 11.800px;
  font-weight: 700;
  color: #d8d8d8;
  white-space: nowrap;
}
.summary-sum {
  grid-column: 10 / 11;
  display: flex;
  align-items: center;
  justify-content: flex-end;
  background: #404040;
  font-size: 11.800px;
  font-weight: 700;
  color: #d8d8d8;
}
.plus {
  width: 16px;
  height: 20px;
  margin-left: 4px;
  border-radius: 8px;
  background: #2a2e38;
  display: flex;
  align-items: center;
  justify-content: center;
}
.summary-rest { grid-column: 11 / 13; background: #404040; }

.bottom {
  height: 25px;
  margin-top: auto;
  flex: none;
  display: flex;
  align-items: flex-start;
  padding-left: 6px;
  box-sizing: border-box;
  border-top: 1px solid #8a8a8a;
  background: #2b2b2b;
  font-size: 11.600px;
  color: #b8b8b8;
}
.btab {
  height: 13px;
  margin-top: 3px;
  padding: 0 10px;
  border-right: 1px solid #4c4c4c;
  white-space: nowrap;
}
.btab:last-of-type { border-right: 0; }
.btab.active {
  height: 19px;
  margin-top: -1px;
  padding: 0 10px;
  line-height: 19px;
  box-sizing: border-box;
  border: 1px solid #a8a8a8;
  border-top: 0;
  background: #232323;
  color: #ddd;
}
.status { margin-left: auto; display: flex; align-items: center; height: 20px; gap: 12px; padding-right: 8px; }
.st { display: flex; align-items: center; gap: 3px; }
.st.dim { color: #5c5c5c; }
</style>
